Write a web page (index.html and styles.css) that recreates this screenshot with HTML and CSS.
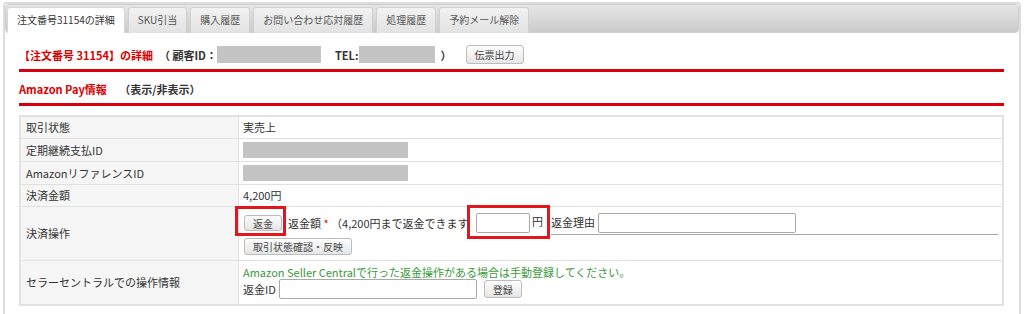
FILE: index.html
```html
<!DOCTYPE html>
<html lang="ja">
<head>
    <meta charset="UTF-8">
    <meta name="viewport" content="width=device-width, initial-scale=1.0">
    <title>注文番号31154の詳細</title>
    <link rel="stylesheet" href="styles.css">
</head>
<body>
    <div class="tabs">
        <ul class="tab-nav">
            <li class="active">注文番号31154の詳細</li>
            <li>SKU引当</li>
            <li>購入履歴</li>
            <li>お問い合わせ応対履歴</li>
            <li>処理履歴</li>
            <li>予約メール解除</li>
        </ul>
        <div class="panel">
            <div class="order-head">
                <span class="order-title">【注文番号 31154】の詳細</span>
                <span class="cust">（ 顧客ID：</span>
                <span class="mask mask-id"></span>
                <span class="cust tel">TEL:</span>
                <span class="mask mask-tel"></span>
                <span class="cust">）</span>
                <button class="btn btn-slip">伝票出力</button>
            </div>
            <div class="section-head">
                <span class="section-title">Amazon Pay情報</span>
                <span class="toggle">（表示/非表示）</span>
            </div>
            <table class="info">
                <tr>
                    <th>取引状態</th>
                    <td>実売上</td>
                </tr>
                <tr>
                    <th>定期継続支払ID</th>
                    <td><span class="mask mask-ref"></span></td>
                </tr>
                <tr>
                    <th>AmazonリファレンスID</th>
                    <td><span class="mask mask-ref"></span></td>
                </tr>
                <tr>
                    <th>決済金額</th>
                    <td>4,200円</td>
                </tr>
                <tr>
                    <th>決済操作</th>
                    <td class="ops">
                        <div class="refund-line">
                            <span class="mark mark-btn"><button class="btn btn-refund">返金</button></span>
                            <span class="refund-label">返金額 <span class="req">*</span> （4,200円まで返金できます</span>
                            <span class="mark mark-amount"><input type="text" class="amount"> 円</span>
                            <span class="reason">返金理由 <input type="text" class="reason-input"></span>
                        </div>
                        <button class="btn btn-check">取引状態確認・反映</button>
                    </td>
                </tr>
                <tr>
                    <th>セラーセントラルでの操作情報</th>
                    <td class="seller">
                        <div class="note">Amazon Seller Centralで行った返金操作がある場合は手動登録してください。</div>
                        <div class="refund-id">
                            返金ID <input type="text" class="id-input">
                            <button class="btn btn-save">登録</button>
                        </div>
                    </td>
                </tr>
            </table>
        </div>
    </div>
</body>
</html>
```

FILE: styles.css
```css
body {
    margin: 0;
    font-family: "Noto Sans CJK JP", sans-serif;
    font-size: 11px;
    color: #333;
    background: #fff;
}
.tabs {
    margin: 2px 3px 0;
    border: 2px solid #dcdcdc;
    border-radius: 4px;
    min-height: 330px;
}
.tab-nav {
    display: flex;
    margin: 0;
    padding: 2px 1px 0;
    list-style: none;
    border: 1px solid #cfcfcf;
    border-radius: 4px;
    background: linear-gradient(#e6e6e6, #cbcbcb);
}
.tab-nav li {
    margin-right: 3px;
    margin-bottom: -1px;
    padding: 0 9px;
    line-height: 24px;
    font-size: 10px;
    color: #555;
    border: 1px solid #d0d0d0;
    border-bottom: 0;
    border-radius: 3px 3px 0 0;
    background: linear-gradient(#f2f2f2, #e2e2e2);
}
.tab-nav li.active {
    padding-bottom: 1px;
    color: #333;
    background: #fff;
    border-color: #d6d6d6;
}
.panel {
    padding: 0 15px 0 14px;
}
.order-head {
    display: flex;
    align-items: center;
    padding: 12px 0 5px;
    border-bottom: 3px solid #d8000c;
    font-weight: bold;
}
.order-title {
    color: #e00000;
}
.cust {
    margin-left: 6px;
}
.tel {
    margin-left: 14px;
}
.mask {
    display: inline-block;
    height: 17px;
    background: #c4c4c4;
}
.mask-id {
    width: 104px;
}
.mask-tel {
    width: 76px;
}
.mask-ref {
    display: block;
    width: 165px;
    height: 16px;
}
.btn {
    font-family: inherit;
    font-size: 10px;
    color: #444;
    padding: 0 9px;
    height: 17px;
    line-height: 15px;
    border: 1px solid #bcbcbc;
    border-radius: 3px;
    background: linear-gradient(#fdfdfd, #e6e6e6);
}
.btn-slip {
    margin-left: 14px;
    padding: 0 8px;
    height: 19px;
}
.section-head {
    padding: 10px 0 7px;
    line-height: 14px;
    border-bottom: 3px solid #d8000c;
    font-weight: bold;
}
.section-title {
    color: #e00000;
}
.toggle {
    margin-left: 10px;
}
.info {
    width: 100%;
    margin-top: 9px;
    border-collapse: collapse;
    border: 2px solid #e2e2e2;
}
.info th, .info td {
    padding: 3px 4px;
    line-height: 15px;
    border: 1px solid #e0e0e0;
    text-align: left;
    vertical-align: middle;
}
.info th {
    width: 208px;
    padding-left: 5px;
    font-weight: normal;
    background: #f6f6f6;
}
.info td.ops {
    padding-top: 4px;
    padding-bottom: 5px;
}
.refund-line {
    display: flex;
    align-items: center;
    height: 24px;
}
.mark {
    position: relative;
}
.mark::after {
    content: "";
    position: absolute;
    border: 3px solid #e3151d;
}
.mark-btn {
    margin-left: 1px;
    margin-right: 6px;
}
.btn-refund {
    padding: 0 8px;
    height: 16px;
    display: block;
}
.mark-btn::after {
    top: -9px;
    left: -9px;
    right: -4px;
    bottom: -5px;
}
.mark-amount {
    margin-left: 7px;
    margin-right: 8px;
}
.mark-amount::after {
    top: -8px;
    left: -9px;
    right: -7px;
    bottom: -6px;
}
.req {
    color: #e00000;
}
input {
    font-family: inherit;
    font-size: 11px;
    height: 20px;
    box-sizing: border-box;
    border: 1px solid #a9a9a9;
    border-radius: 2px;
    vertical-align: middle;
}
.amount {
    width: 54px;
}
.reason {
    flex: 1;
    align-self: stretch;
    display: flex;
    align-items: center;
    border-bottom: 1px solid #a8a8a8;
}
.reason-input {
    width: 198px;
    margin-left: 3px;
}
.btn-check {
    display: block;
    margin: 3px 0 0 1px;
    padding: 0 8px;
}
.info td.seller {
    padding-top: 4px;
    padding-bottom: 5px;
}
.note {
    color: #3a9a3a;
    line-height: 14px;
}
.refund-id {
    display: flex;
    align-items: center;
    height: 20px;
}
.id-input {
    width: 198px;
    margin-left: 3px;
}
.btn-save {
    margin-left: 7px;
    padding: 0 8px;
    height: 18px;
}
```
